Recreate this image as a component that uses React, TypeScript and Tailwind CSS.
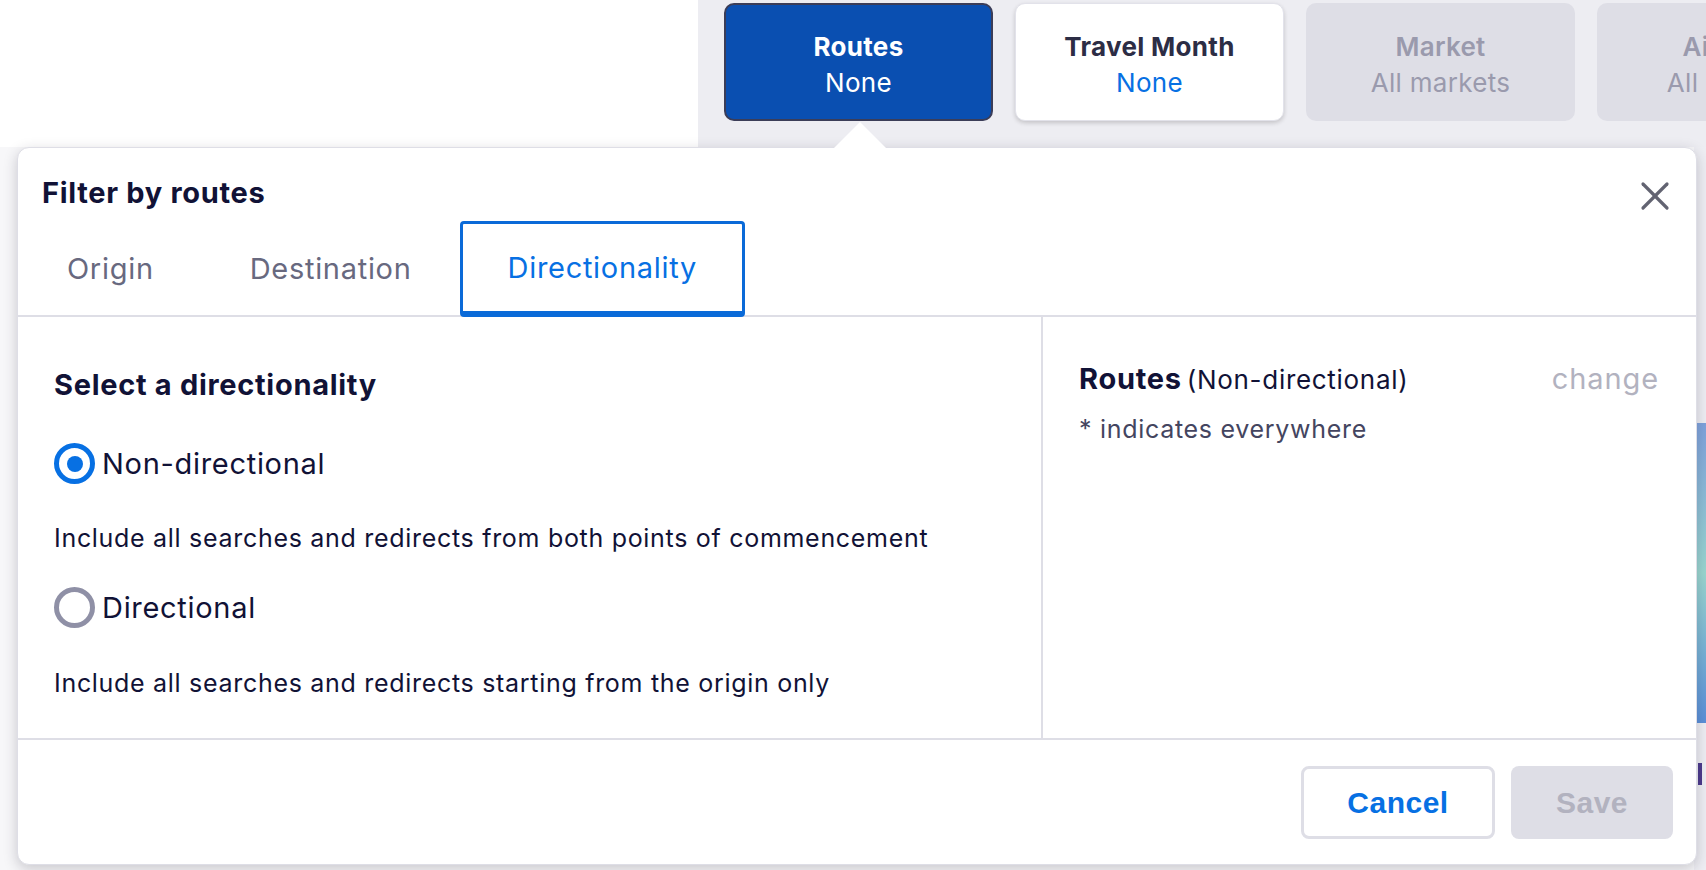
import { X } from "lucide-react";

const font = { fontFamily: "Inter, 'Noto Sans', sans-serif" };
const buttonFont = { fontFamily: "'Liberation Sans', Arial, sans-serif" };

interface Filter {
    label: string;
    value: string;
    state: "active" | "idle" | "disabled";
}

const filters: Filter[] = [
    { label: "Routes", value: "None", state: "active" },
    { label: "Travel Month", value: "None", state: "idle" },
    { label: "Market", value: "All markets", state: "disabled" },
    { label: "Airlines", value: "All airlines", state: "disabled" },
];

const FilterButton = ({ label, value, state }: Filter) => {
    const box =
        state === "active"
            ? "bg-[#0a4fb1] border-2 border-[#3b3d58] text-white"
            : state === "idle"
                ? "bg-white border border-[#e2e2ea] shadow-[0_2px_4px_rgba(37,32,31,0.2)] text-[#2c2d45]"
                : "bg-[#dedee6] text-[#9a9aad]";
    const valueColor = state === "idle" ? "text-[#0770e3]" : "";
    return (
        <div className={`w-[269px] h-[118px] shrink-0 rounded-[10px] flex flex-col items-center justify-center pt-[6px] tracking-[0.3px] ${box}`}>
            <span className={`text-[26px] leading-[36px] ${state === "disabled" ? "font-semibold" : "font-bold"}`}>{label}</span>
            <span className={`text-[26px] leading-[36px] ${valueColor}`}>{value}</span>
        </div>
    );
};

const Radio = ({ checked }: { checked: boolean }) => {
    if (checked) {
        return (
            <span className="w-[41px] h-[41px] rounded-full border-[5px] border-[#0770e3] flex items-center justify-center shrink-0">
                <span className="w-[16px] h-[16px] rounded-full bg-[#0770e3]" />
            </span>
        );
    }
    return <span className="w-[41px] h-[41px] rounded-full border-[5px] border-[#8f90a6] shrink-0" />;
};

const App = () => {
    const tabs = ["Origin", "Destination", "Directionality"];

    return (
        <div className="relative w-full h-[870px] overflow-hidden bg-white" style={font}>
            {/* page behind the popover */}
            <div className="flex h-[147px]">
                <div className="w-[698px] shrink-0 bg-white" />
                <div className="flex-1 bg-[#ededf2] flex gap-[22px] pl-[26px] pt-[3px] overflow-hidden">
                    {filters.map((f) => (
                        <FilterButton key={f.label} {...f} />
                    ))}
                </div>
            </div>
            <div className="flex h-[723px]">
                <div className="flex-1 bg-[#f7f7f9]" />
                <div className="w-[12px] bg-[#eeeef3] flex flex-col">
                    <div className="h-[276px]" />
                    <div className="h-[300px] ml-[3px] bg-gradient-to-b from-[#7fa2dc] via-[#9ad6cf] to-[#5a8fd8]" />
                    <div className="h-[40px]" />
                    <div className="h-[22px] ml-[4px] w-[4px] bg-[#4b3a8c]" />
                </div>
            </div>

            {/* pointer */}
            <div className="absolute left-[834px] top-[122px] w-0 h-0 border-l-[26px] border-r-[26px] border-b-[26px] border-l-transparent border-r-transparent border-b-white z-20" />

            {/* popover */}
            <div className="absolute left-[17px] top-[147px] w-[1680px] h-[718px] bg-white rounded-[12px] border border-[#dedee6] shadow-[0_4px_14px_rgba(37,32,51,0.22)] flex flex-col z-10">
                <div className="relative flex flex-col">
                    <h2 className="pl-[24px] pt-[27px] text-[29px] leading-[36px] font-bold tracking-[0.7px] text-[#111236]">Filter by routes</h2>
                    <button className="absolute right-[17px] top-[24px] text-[#626371]">
                        <X size={48} strokeWidth={1.6} />
                    </button>
                    <div className="flex mt-[10px] border-b-2 border-[#dedee6]">
                        {tabs.map((t) => {
                            const active = t === "Directionality";
                            return (
                                <div
                                    key={t}
                                    className={`h-[96px] flex items-center text-[29px] tracking-[0.7px] -mb-[2px] ${
                                        active
                                            ? "border-[3px] border-b-[6px] border-[#0a6ad8] rounded-[4px] text-[#0770e3] px-[45px]"
                                            : "text-[#68697f] px-[48px]"
                                    } ${t === "Origin" ? "ml-[1px]" : ""}`}
                                >
                                    {t}
                                </div>
                            );
                        })}
                    </div>
                </div>

                <div className="flex flex-1 border-b-2 border-[#dedee6]">
                    <div className="w-[1025px] border-r-2 border-[#dedee6] pl-[36px] pt-[50px] text-[#111236] tracking-[0.7px]">
                        <h3 className="text-[29px] leading-[36px] font-bold">Select a directionality</h3>
                        <label className="flex items-center gap-[7px] mt-[40px]">
                            <Radio checked />
                            <span className="text-[29px] leading-[36px]">Non-directional</span>
                        </label>
                        <p className="mt-[38px] text-[25px] leading-[32px]">Include all searches and redirects from both points of commencement</p>
                        <label className="flex items-center gap-[7px] mt-[33px]">
                            <Radio checked={false} />
                            <span className="text-[29px] leading-[36px]">Directional</span>
                        </label>
                        <p className="mt-[39px] text-[25px] leading-[32px]">Include all searches and redirects starting from the origin only</p>
                    </div>
                    <div className="flex-1 pl-[36px] pr-[37px] pt-[40px] tracking-[0.7px]">
                        <div className="flex items-baseline justify-between">
                            <p className="text-[#111236]">
                                <span className="text-[29px] font-bold">Routes</span>{" "}
                                <span className="text-[26px]">(Non-directional)</span>
                            </p>
                            <span className="text-[29px] text-[#b2b2bf] tracking-[0.9px]">change</span>
                        </div>
                        <p className="mt-[10px] text-[25px] text-[#444560]">* indicates everywhere</p>
                    </div>
                </div>

                <div className="h-[124px] flex items-center justify-end gap-[16px] pr-[23px]">
                    <button className="w-[194px] h-[73px] rounded-[8px] border-[3px] border-[#dedee6] bg-white text-[#0770e3] text-[30px] font-bold tracking-[0.5px]" style={buttonFont}>
                        Cancel
                    </button>
                    <button className="w-[162px] h-[73px] rounded-[8px] bg-[#dedee6] text-[#b2b2bf] text-[30px] font-bold tracking-[0.5px]" style={buttonFont}>
                        Save
                    </button>
                </div>
            </div>
        </div>
    );
};

export default App;
